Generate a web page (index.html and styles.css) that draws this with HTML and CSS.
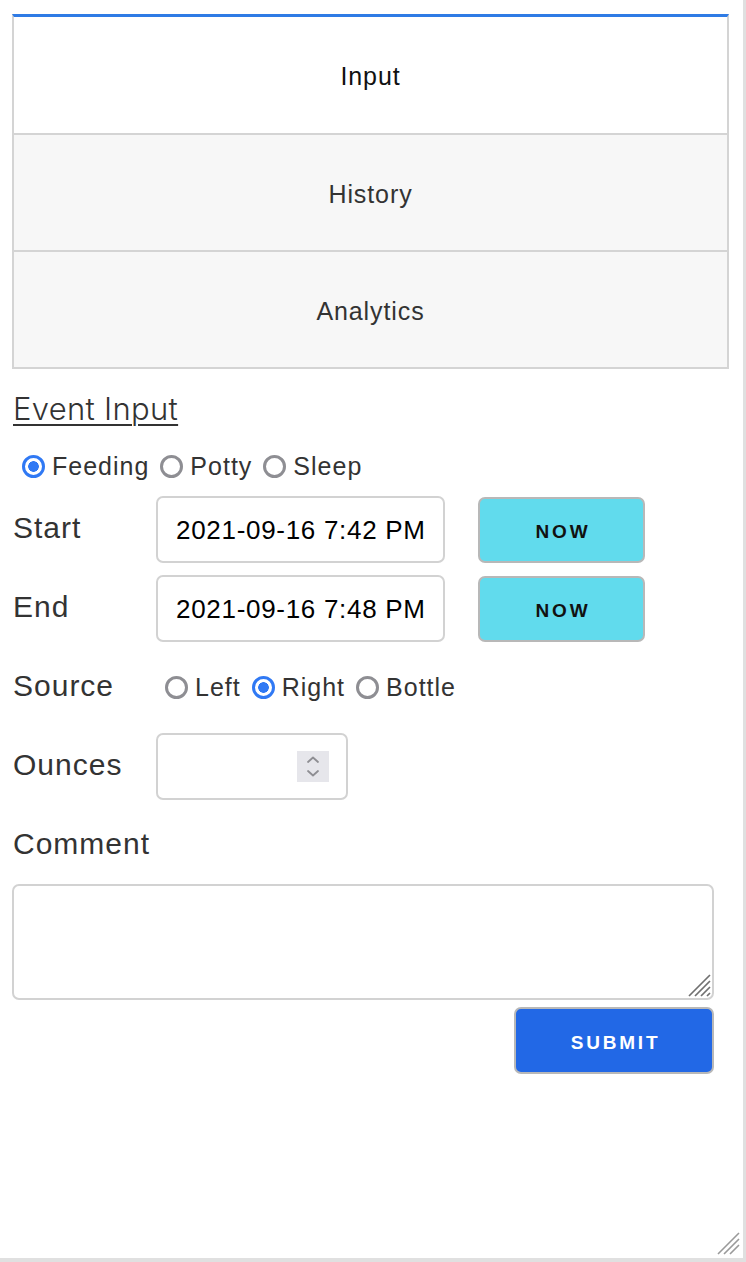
FILE: index.html
```html
<!DOCTYPE html>
<html lang="en">
<head>
<meta charset="utf-8">
<title>Event Input</title>
<link rel="stylesheet" href="styles.css">
</head>
<body>
<div class="frame">
  <nav class="tabs">
    <button class="tab active" type="button">Input</button>
    <button class="tab" type="button">History</button>
    <button class="tab" type="button">Analytics</button>
  </nav>
  <form class="form">
    <h2 class="title">Event Input</h2>
    <div class="radios type-radios">
      <label class="radio"><input type="radio" name="type" checked><span>Feeding</span></label>
      <label class="radio"><input type="radio" name="type"><span>Potty</span></label>
      <label class="radio"><input type="radio" name="type"><span>Sleep</span></label>
    </div>
    <div class="grid">
      <label class="lbl">Start</label>
      <input class="field date" type="text" value="2021-09-16 7:42 PM">
      <button class="now" type="button">NOW</button>

      <label class="lbl">End</label>
      <input class="field date" type="text" value="2021-09-16 7:48 PM">
      <button class="now" type="button">NOW</button>

      <label class="lbl">Source</label>
      <div class="radios source-radios">
        <label class="radio"><input type="radio" name="src"><span>Left</span></label>
        <label class="radio"><input type="radio" name="src" checked><span>Right</span></label>
        <label class="radio"><input type="radio" name="src"><span>Bottle</span></label>
      </div>
      <div></div>

      <label class="lbl">Ounces</label>
      <div class="field ounces">
        <span class="spin">
          <svg width="32" height="31" viewBox="0 0 32 31"><path d="M11 11 L16 6.5 L21 11" fill="none" stroke="#8e8e93" stroke-width="1.8" stroke-linecap="round" stroke-linejoin="round"/><path d="M11 20 L16 24.5 L21 20" fill="none" stroke="#8e8e93" stroke-width="1.8" stroke-linecap="round" stroke-linejoin="round"/></svg>
        </span>
      </div>
      <div></div>
    </div>
    <label class="lbl comment-lbl">Comment</label>
    <div class="ta-wrap">
      <textarea class="comment"></textarea>
      <svg class="grip ta-grip" width="24" height="24" viewBox="0 0 24 24"><path d="M23 2 L2 23 M23 8 L8 23 M23 14 L14 23 M23 20 L20 23" stroke="#707070" stroke-width="1.7"/></svg>
    </div>
    <div class="actions">
      <button class="submit" type="button">SUBMIT</button>
    </div>
  </form>
  <svg class="grip frame-grip" width="24" height="24" viewBox="0 0 24 24"><path d="M23 2 L2 23 M23 8 L8 23 M23 14 L14 23" stroke="#9a9a9a" stroke-width="1.6"/></svg>
</div>
</body>
</html>
```
FILE: styles.css
```css
* { box-sizing: border-box; }
html, body { margin: 0; padding: 0; background: #fff; }
body { font-family: "Liberation Sans", Arial, Helvetica, sans-serif; color: #333; }

.frame {
  position: relative;
  width: 746px;
  height: 1262px;
  border-right: 3px solid #e0e0e0;
  border-bottom: 4px solid #e0e0e0;
  padding-top: 14px;
}

.tabs {
  display: flex;
  flex-direction: column;
  margin-left: 12px;
  width: 717px;
  border: 2px solid #d4d4d4;
  border-top: 3px solid #2f7be5;
}
.tab {
  height: 117px;
  border: 0;
  border-top: 2px solid #d4d4d4;
  background: #f7f7f7;
  font-family: "Liberation Sans", Arial, sans-serif;
  font-size: 25px;
  letter-spacing: 0.9px;
  color: #333;
  padding: 3px 0 0 0;
  margin: 0;
}
.tab.active {
  height: 116px;
  border-top: 0;
  background: #fff;
  color: #111;
}

.form { padding-left: 12px; width: 714px; }

.title {
  margin: 20px 0 0 1px;
  font-family: Inter, "Liberation Sans", sans-serif;
  font-weight: 300;
  font-size: 31px;
  letter-spacing: 0.3px;
  line-height: 40px;
  color: #333;
  text-decoration: underline;
  text-decoration-thickness: 1.5px;
  text-underline-offset: 4px;
  display: inline-block;
}

.radios { display: flex; align-items: center; }
.type-radios { margin-top: 22px; height: 30px; padding-left: 10px; }
.source-radios { padding-left: 9px; }
.radio { display: flex; align-items: center; margin-right: 11px; font-size: 25px; letter-spacing: 1px; color: #333; }
.radio input {
  appearance: none;
  -webkit-appearance: none;
  width: 23px;
  height: 23px;
  margin: 0 7px 0 0;
  border: 3px solid #8e8e93;
  border-radius: 50%;
  background: #fff;
}
.radio input:checked {
  border-color: #3079f4;
  background: radial-gradient(circle, #3079f4 0 5px, #fff 5.6px);
}

.grid {
  display: grid;
  grid-template-columns: 144px 322px 167px;
  grid-auto-rows: 67px;
  row-gap: 12px;
  margin-top: 15px;
  align-items: center;
}
.lbl {
  font-size: 30px;
  letter-spacing: 1px;
  color: #333;
  padding-left: 1px;
  margin-top: -3px;
}
.field {
  width: 289px;
  height: 67px;
  border: 2px solid #d2d2d2;
  border-radius: 7px;
  background: #fff;
}
.date {
  padding: 2px 0 0 18px;
  font-family: "Liberation Sans", Arial, sans-serif;
  font-size: 26px;
  letter-spacing: 0.7px;
  color: #000;
  outline: none;
}
.ounces {
  width: 192px;
  display: flex;
  align-items: center;
  justify-content: flex-end;
  padding-right: 17px;
}
.spin { width: 32px; height: 31px; background: #e6e6eb; display: block; }
.spin svg { display: block; }

.now {
  height: 66px;
  width: 167px;
  background: #61dbed;
  border: 2px solid #b8b8b8;
  border-radius: 7px;
  font-family: "Liberation Sans", Arial, sans-serif;
  font-weight: bold;
  font-size: 19px;
  letter-spacing: 2.8px;
  padding: 4px 0 0 3px;
  color: #111;
}

.comment-lbl { display: block; margin-top: 24px; line-height: 40px; }
.ta-wrap { position: relative; margin-top: 20px; width: 702px; height: 116px; }
.comment {
  display: block;
  width: 702px;
  height: 116px;
  border: 2px solid #d2d2d2;
  border-radius: 7px;
  resize: none;
  outline: none;
}
.grip { position: absolute; display: block; }
.ta-grip { right: 3px; bottom: 3px; }
.frame-grip { right: 3px; bottom: 3px; }

.actions { display: flex; justify-content: flex-end; width: 702px; margin-top: 7px; }
.submit {
  width: 200px;
  height: 67px;
  background: #2268e6;
  border: 2px solid #b8b8b8;
  border-radius: 7px;
  color: #fff;
  font-family: "Liberation Sans", Arial, sans-serif;
  font-weight: bold;
  font-size: 19px;
  letter-spacing: 2.8px;
  padding: 4px 0 0 3px;
}
```
